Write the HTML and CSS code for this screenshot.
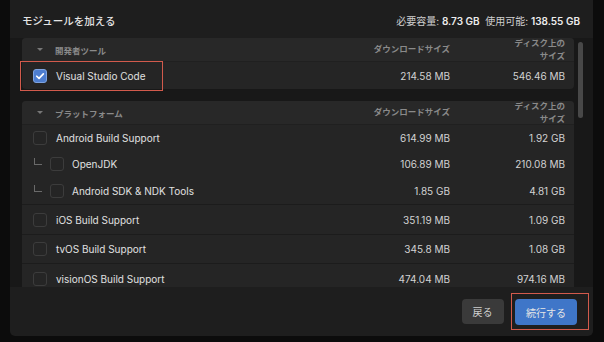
FILE: index.html
```html
<!DOCTYPE html>
<html lang="ja">
<head>
  <meta charset="UTF-8" />
  <title>モジュールを加える</title>
  <link rel="stylesheet" href="styles.css">
</head>
<body>

  <div class="dialog">
    <div class="top">
      <div class="title">モジュールを加える</div>
      <div class="space">必要容量: <b>8.73 GB</b>&nbsp; 使用可能: <b>138.55 GB</b></div>
    </div>

    <div class="list">
      <div class="group">
        <div class="ghead">
          <div class="gname"><span class="tri"></span>開発者ツール</div>
          <div class="col dl">ダウンロードサイズ</div>
          <div class="col disk">ディスク上の<br>サイズ</div>
        </div>
        <div class="row first hl">
          <div class="name"><span class="box on"><svg viewBox="0 0 10 10"><path d="M2.3 5.2 L4.2 7 L7.8 3.2" /></svg></span>Visual Studio Code</div>
          <div class="col dl">214.58 MB</div>
          <div class="col disk">546.46 MB</div>
        </div>
      </div>

      <div class="group">
        <div class="ghead">
          <div class="gname"><span class="tri"></span>プラットフォーム</div>
          <div class="col dl">ダウンロードサイズ</div>
          <div class="col disk">ディスク上の<br>サイズ</div>
        </div>
        <div class="block">
          <div class="row sub1">
            <div class="name"><span class="box"></span>Android Build Support</div>
            <div class="col dl">614.99 MB</div>
            <div class="col disk">1.92 GB</div>
          </div>
          <div class="row sub2">
            <div class="name child"><span class="elbow"></span><span class="box"></span>OpenJDK</div>
            <div class="col dl">106.89 MB</div>
            <div class="col disk">210.08 MB</div>
          </div>
          <div class="row sub3">
            <div class="name child"><span class="elbow"></span><span class="box"></span>Android SDK &amp; NDK Tools</div>
            <div class="col dl">1.85 GB</div>
            <div class="col disk">4.81 GB</div>
          </div>
        </div>
        <div class="row line r29">
          <div class="name"><span class="box"></span>iOS Build Support</div>
          <div class="col dl">351.19 MB</div>
          <div class="col disk">1.09 GB</div>
        </div>
        <div class="row line r28">
          <div class="name"><span class="box"></span>tvOS Build Support</div>
          <div class="col dl">345.8 MB</div>
          <div class="col disk">1.08 GB</div>
        </div>
        <div class="row line r29">
          <div class="name"><span class="box"></span>visionOS Build Support</div>
          <div class="col dl">474.04 MB</div>
          <div class="col disk">974.16 MB</div>
        </div>
      </div>

      <div class="scrollbar"></div>
    </div>

    <div class="footer">
      <button class="btn back">戻る</button>
      <span class="hl-btn"><button class="btn next">続行する</button></span>
    </div>
  </div>

</body>
</html>
```

FILE: styles.css
```css
:root {
  --bg-out: #0c0c0c;
  --bg-dialog: #1e1e1e;
  --bg-list: #181818;
  --bg-group: #252525;
  --bg-head: #282828;
  --text: #e0e0e0;
  --muted: #8a8a8a;
  --red: #d25a4c;
}

body {
  margin: 0;
  background: var(--bg-out);
  font-family: "Inter", "Noto Sans CJK JP", sans-serif;
  color: var(--text);
  height: 342px;
  overflow: hidden;
}

.dialog {
  margin-left: 10px;
  width: 583px;
  height: 336px;
  background: var(--bg-dialog);
  border-radius: 0 0 5px 5px;
  display: flex;
  flex-direction: column;
}

.top {
  height: 38px;
  display: flex;
  align-items: center;
  justify-content: space-between;
  padding: 3px 13px 0 12px;
  box-sizing: border-box;
}

.title {
  font-size: 10.5px;
  font-weight: 500;
  color: #e4e4e4;
}

.space {
  font-size: 10px;
  color: #cfcfcf;
}

.space b {
  font-weight: 600;
  color: #ececec;
}

.list {
  position: relative;
  height: 249px;
  background: var(--bg-list);
  padding: 0 19px 0 12px;
  overflow: hidden;
}

.group {
  background: var(--bg-group);
  border-radius: 4px;
  margin-bottom: 12px;
}

.ghead {
  height: 24px;
  display: flex;
  align-items: center;
  background: var(--bg-head);
  border-radius: 4px 4px 0 0;
  border-bottom: 1px solid #202020;
  box-sizing: border-box;
  color: var(--muted);
  font-size: 8.5px;
  font-weight: 600;
}

.gname {
  flex: 1;
  display: flex;
  align-items: center;
  padding-left: 15px;
}

.tri {
  width: 0;
  height: 0;
  border-left: 3px solid transparent;
  border-right: 3px solid transparent;
  border-top: 3px solid #777;
  margin-right: 12px;
}

.col {
  text-align: right;
  font-size: 10px;
}

.ghead .col {
  font-size: 8.5px;
  line-height: 13px;
}

.dl {
  width: 130px;
}

.disk {
  width: 115px;
  padding-right: 9px;
}

.row {
  display: flex;
  align-items: center;
  font-size: 10px;
  color: var(--text);
}

.row .col {
  color: #d2d2d2;
}

.first { height: 27px; }
.sub1 { height: 26px; }
.sub2 { height: 26px; }
.sub3 { height: 27px; }
.r28 { height: 28px; }
.r29 { height: 29px; }

.line {
  border-top: 1px solid #1c1c1c;
}

.name {
  flex: 1;
  display: flex;
  align-items: center;
  padding-left: 11px;
}

.name.child {
  padding-left: 12px;
}

.box {
  width: 12px;
  height: 12px;
  border: 1px solid #3c3c3c;
  border-radius: 3px;
  margin-right: 9px;
  flex: none;
}

.box.on {
  background: #4d7dcf;
  border-color: #7ea3e0;
  display: flex;
}

.box svg {
  width: 12px;
  height: 12px;
  fill: none;
  stroke: #fff;
  stroke-width: 1.4;
  stroke-linecap: round;
  stroke-linejoin: round;
}

.elbow {
  width: 7px;
  height: 6px;
  border-left: 1px solid #6a6a6a;
  border-bottom: 1px solid #6a6a6a;
  margin: -5px 8px 0 0;
}

.child .box {
  margin-right: 8px;
}

.hl {
  position: relative;
}

.hl::after {
  content: "";
  position: absolute;
  left: -2px;
  top: -1px;
  width: 141px;
  height: 28px;
  border: 1.5px solid var(--red);
}

.scrollbar {
  position: absolute;
  right: 10px;
  top: 4px;
  width: 5px;
  height: 76px;
  border-radius: 3px;
  background: #484848;
}

.footer {
  flex: 1;
  display: flex;
  align-items: center;
  justify-content: flex-end;
  padding: 0 4px 0 0;
  gap: 7px;
}

.btn {
  font-family: inherit;
  font-size: 10px;
  color: #e6e6e6;
  border: none;
  border-radius: 4px;
  height: 25px;
  cursor: pointer;
}

.back {
  width: 42px;
  background: #3a3a3a;
  color: #cfcfcf;
}

.hl-btn {
  border: 1.5px solid var(--red);
  padding: 5px 11px 4px 3.5px;
  display: flex;
}

.next {
  width: 62px;
  height: 26px;
  background: #3f76c8;
}
```
